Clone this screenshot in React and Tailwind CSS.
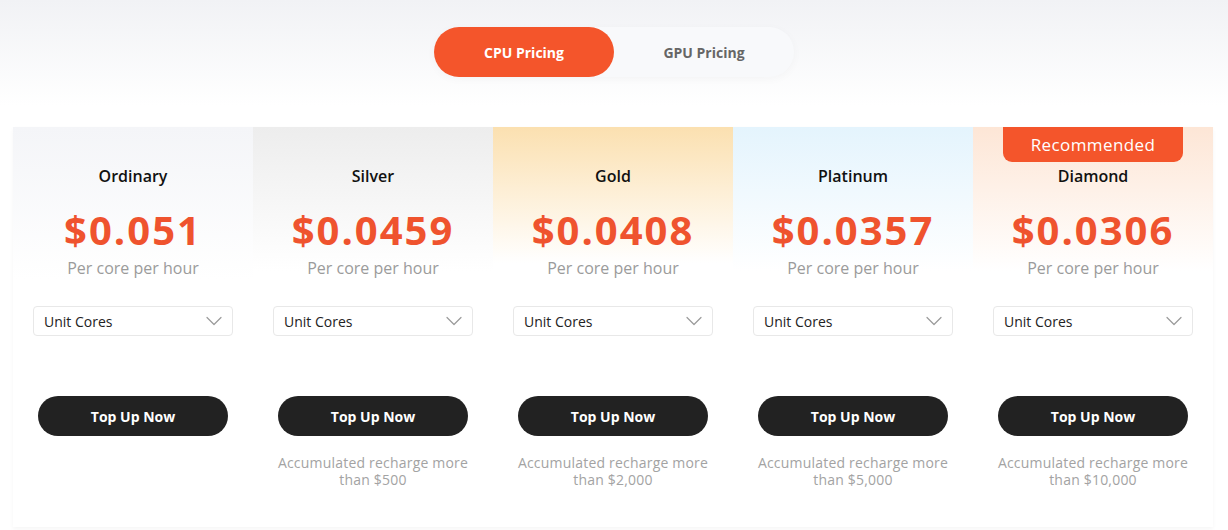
import React, { useState } from 'react';

const plans = [
  { name: 'Ordinary', price: '$0.051', bg: 'bg-gradient-to-b from-[#f4f5f8] to-white to-[38%]', note: null },
  { name: 'Silver', price: '$0.0459', bg: 'bg-gradient-to-b from-[#ededed] to-white to-[36%]', note: 'than $500' },
  { name: 'Gold', price: '$0.0408', bg: 'bg-gradient-to-b from-[#fbe0b0] to-white to-[34%]', note: 'than $2,000' },
  { name: 'Platinum', price: '$0.0357', bg: 'bg-gradient-to-b from-[#e4f4fd] to-white to-[36%]', note: 'than $5,000' },
  { name: 'Diamond', price: '$0.0306', bg: 'bg-gradient-to-b from-[#fde6d6] to-white to-[36%]', note: 'than $10,000', recommended: true },
];

const Chevron = () => (
  <svg width="16" height="10" viewBox="0 0 16 10" fill="none">
    <path d="M1 1.5L8 8.5L15 1.5" stroke="#9a9a9a" strokeWidth="1.2" strokeLinecap="round" strokeLinejoin="round" />
  </svg>
);

const PlanCard = ({ plan }) => (
  <div className={`relative flex h-[400px] w-[240px] flex-col items-center pt-[37px] ${plan.bg}`}>
    {plan.recommended && (
      <div className="absolute left-[30px] top-0 flex h-[35px] w-[180px] items-center justify-center rounded-b-[9px] bg-[#f4552b] text-[17px] tracking-[0.4px] text-white">
        Recommended
      </div>
    )}
    <div className="text-[16px] font-semibold leading-6 text-[#111]">{plan.name}</div>
    <div className="mt-[18px] text-[40px] font-bold leading-[48px] tracking-[2px] text-[#ef532e]">{plan.price}</div>
    <div className="mt-[2px] text-[16px] leading-6 text-[#9b9b9b]">Per core per hour</div>
    <button className="mt-[26px] flex h-[30px] w-[200px] items-center justify-between rounded-[4px] border border-[#e8e8e8] bg-white pl-[10px] pr-[10px] text-[14px] text-[#222]">
      <span>Unit Cores</span>
      <Chevron />
    </button>
    <button className="mt-[60px] h-[40px] w-[190px] rounded-full bg-[#222222] text-[14px] font-bold text-white">
      Top Up Now
    </button>
    <div className="mt-[18px] h-[34px] text-center text-[14px] leading-[17px] tracking-[0.2px] text-[#a3a3a3]">
      {plan.note && (
        <>
          Accumulated recharge more
          <br />
          {plan.note}
        </>
      )}
    </div>
  </div>
);

export default function App() {
  const [tab, setTab] = useState('cpu');

  return (
    <div className="h-[530px] w-[1228px] overflow-hidden bg-gradient-to-b from-[#f1f2f5] to-white to-[20%] font-['Open_Sans',sans-serif]">
      <div className="flex justify-center pt-[27px]">
        <div className="flex h-[50px] w-[360px] rounded-full bg-[#f8f9fb] shadow-[0_2px_10px_rgba(0,0,0,0.03)]">
          <button
            onClick={() => setTab('cpu')}
            className={`h-[50px] w-[180px] rounded-full text-[14px] font-bold ${tab === 'cpu' ? 'bg-[#f4552b] text-white' : 'text-[#666]'}`}
          >
            CPU Pricing
          </button>
          <button
            onClick={() => setTab('gpu')}
            className={`h-[50px] w-[180px] rounded-full text-[14px] font-bold ${tab === 'gpu' ? 'bg-[#f4552b] text-white' : 'text-[#666]'}`}
          >
            GPU Pricing
          </button>
        </div>
      </div>

      <div className="ml-[13px] mt-[50px] flex w-[1200px] bg-white shadow-[0_2px_4px_rgba(0,0,0,0.04)]">
        {plans.map((plan) => (
          <PlanCard key={plan.name} plan={plan} />
        ))}
      </div>
    </div>
  );
}
